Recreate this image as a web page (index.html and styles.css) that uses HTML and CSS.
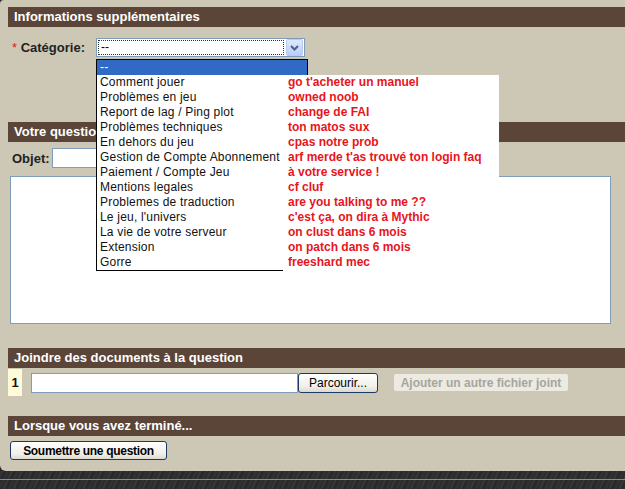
FILE: index.html
```html
<!DOCTYPE html>
<html lang="fr">
<head>
    <meta charset="UTF-8">
    <title>Poser une question</title>
    <link rel="stylesheet" href="styles.css">
</head>
<body>
    <div class="panel">
        <div class="sectionHead">Informations supplémentaires</div>
        <div class="catRow">
            <label class="fieldLabel catLabel"><span class="req">*</span> Catégorie:</label>
            <div class="selectWrap">
                <div class="selectBox">
                    <span class="selectValue">--</span>
                    <span class="selectBtn">
                        <svg width="9" height="6" viewBox="0 0 9 6"><path d="M1 1 L4.5 4.5 L8 1" fill="none" stroke="#4d6185" stroke-width="2"/></svg>
                    </span>
                </div>
                <ul class="selectList">
                    <li class="selected">--</li>
                    <li>Comment jouer</li>
                    <li>Problèmes en jeu</li>
                    <li>Report de lag / Ping plot</li>
                    <li>Problèmes techniques</li>
                    <li>En dehors du jeu</li>
                    <li>Gestion de Compte Abonnement</li>
                    <li>Paiement / Compte Jeu</li>
                    <li>Mentions legales</li>
                    <li>Problemes de traduction</li>
                    <li>Le jeu, l'univers</li>
                    <li>La vie de votre serveur</li>
                    <li>Extension</li>
                    <li>Gorre</li>
                </ul>
                <div class="answers">
                    <div>go t'acheter un manuel</div>
                    <div>owned noob</div>
                    <div>change de FAI</div>
                    <div>ton matos sux</div>
                    <div>cpas notre prob</div>
                    <div>arf merde t'as trouvé ton login faq</div>
                    <div>à votre service !</div>
                    <div>cf cluf</div>
                    <div>are you talking to me ??</div>
                    <div>c'est ça, on dira à Mythic</div>
                    <div>on clust dans 6 mois</div>
                    <div>on patch dans 6 mois</div>
                    <div>freeshard mec</div>
                </div>
            </div>
        </div>

        <div class="sectionHead questionHead">Votre question</div>
        <div class="objetRow">
            <label class="fieldLabel">Objet:</label>
            <input type="text" class="textInput objetInput">
        </div>
        <textarea class="questionText"></textarea>

        <div class="sectionHead attachHead">Joindre des documents à la question</div>
        <div class="fileRow">
            <span class="fileNum">1</span>
            <input type="text" class="textInput fileInput">
            <button class="xpButton browseButton">Parcourir...</button>
            <button class="addButton" disabled>Ajouter un autre fichier joint</button>
        </div>

        <div class="sectionHead doneHead">Lorsque vous avez terminé...</div>
        <button class="xpButton submitButton">Soumettre une question</button>
    </div>
    <div class="floor"></div>
</body>
</html>
```

FILE: styles.css
```css
body {
    margin: 0;
    background: #2b2b2b;
    font-family: "Liberation Sans", Arial, sans-serif;
    overflow: hidden;
}
.panel {
    background: #cdc8b6;
    padding: 7px 0 11px 8px;
    border-radius: 4px 0 0 6px;
}
.sectionHead {
    height: 20px;
    line-height: 20px;
    padding-left: 6px;
    background: #5a4538;
    color: #fff;
    font-size: 13px;
    font-weight: bold;
}
.fieldLabel {
    font-size: 13px;
    font-weight: bold;
    color: #222;
}
.req {
    color: #e8141c;
    font-weight: normal;
}

/* Catégorie select */
.catRow {
    display: flex;
    align-items: center;
    margin-top: 11px;
    height: 19px;
}
.catLabel {
    width: 84px;
    margin-left: 4px;
}
.selectWrap {
    position: relative;
}
.selectBox {
    display: flex;
    align-items: center;
    width: 207px;
    height: 17px;
    border: 1px solid #7f9db9;
    background: #fff;
}
.selectValue {
    flex: 1;
    height: 13px;
    margin: 0 2px 0 1px;
    border: 1px dotted #333;
    font-size: 12px;
    line-height: 12px;
    padding-left: 2px;
}
.selectBtn {
    display: flex;
    align-items: center;
    justify-content: center;
    width: 15px;
    height: 15px;
    margin-right: 1px;
    border: 1px solid #b8cbf4;
    border-radius: 2px;
    background: linear-gradient(#dfe8fd, #b9cdfa);
}
.selectList {
    position: absolute;
    top: 21px;
    left: 0;
    width: 210px;
    margin: 0;
    padding: 0;
    list-style: none;
    background: #fff;
    border: 1px solid #000;
    z-index: 2;
}
.selectList li {
    height: 15px;
    line-height: 15px;
    padding-left: 3px;
    font-size: 12px;
    letter-spacing: 0.2px;
    color: #111;
    white-space: nowrap;
}
.selectList li.selected {
    background: #316ac5;
    color: #fff;
}
.answers {
    position: absolute;
    top: 37px;
    left: 187px;
    width: 211px;
    padding: 0 0 4px 5px;
    background: #fff;
    z-index: 3;
}
.answers div {
    height: 15px;
    line-height: 15px;
    font-size: 12px;
    font-weight: bold;
    color: #e8141c;
    white-space: nowrap;
}

/* Votre question */
.questionHead {
    margin-top: 65px;
}
.objetRow {
    display: flex;
    align-items: center;
    margin-top: 6px;
    height: 20px;
}
.objetRow .fieldLabel {
    width: 40px;
    margin-left: 4px;
}
.textInput {
    box-sizing: border-box;
    height: 20px;
    border: 1px solid #7f9db9;
    background: #fff;
    margin: 0;
    padding: 0 3px;
}
.objetInput {
    width: 340px;
}
.questionText {
    display: block;
    box-sizing: border-box;
    width: 601px;
    height: 148px;
    margin: 8px 0 0 2px;
    border: 1px solid #7f9db9;
    background: #fff;
    resize: none;
}

/* Pièces jointes */
.attachHead {
    margin-top: 24px;
}
.fileRow {
    display: flex;
    align-items: center;
    margin-top: 1px;
    height: 27px;
}
.fileNum {
    align-self: stretch;
    width: 14px;
    line-height: 27px;
    text-align: center;
    background: #fffbd9;
    font-size: 13px;
    font-weight: bold;
    color: #111;
}
.fileInput {
    width: 267px;
    margin-left: 9px;
}
.xpButton {
    box-sizing: border-box;
    border: 1px solid #1c3a63;
    border-radius: 3px;
    background: linear-gradient(#ffffff, #f0efe8 70%, #dcdad0);
    color: #000;
    font-family: "Liberation Sans", Arial, sans-serif;
    padding: 0;
}
.browseButton {
    width: 80px;
    height: 20px;
    font-size: 12px;
}
.addButton {
    box-sizing: border-box;
    width: 174px;
    height: 17px;
    margin-left: 16px;
    border: none;
    border-radius: 2px;
    background: #edeae1;
    color: #a6a59e;
    font-family: "Liberation Sans", Arial, sans-serif;
    font-size: 12px;
    font-weight: bold;
    padding: 0;
}

/* Fin */
.doneHead {
    margin-top: 20px;
}
.submitButton {
    display: block;
    width: 157px;
    height: 19px;
    margin: 5px 0 0 2px;
    font-size: 12px;
    font-weight: bold;
    letter-spacing: -0.3px;
}
.floor {
    height: 30px;
    background:
        linear-gradient(to bottom, transparent 8px, #8e8e8e 8px, #8e8e8e 9px, transparent 9px),
        repeating-linear-gradient(115deg, #2a2a2a 0, #3a3a3a 2px, #262626 4px, #333 7px, #2c2c2c 9px);
}
```
